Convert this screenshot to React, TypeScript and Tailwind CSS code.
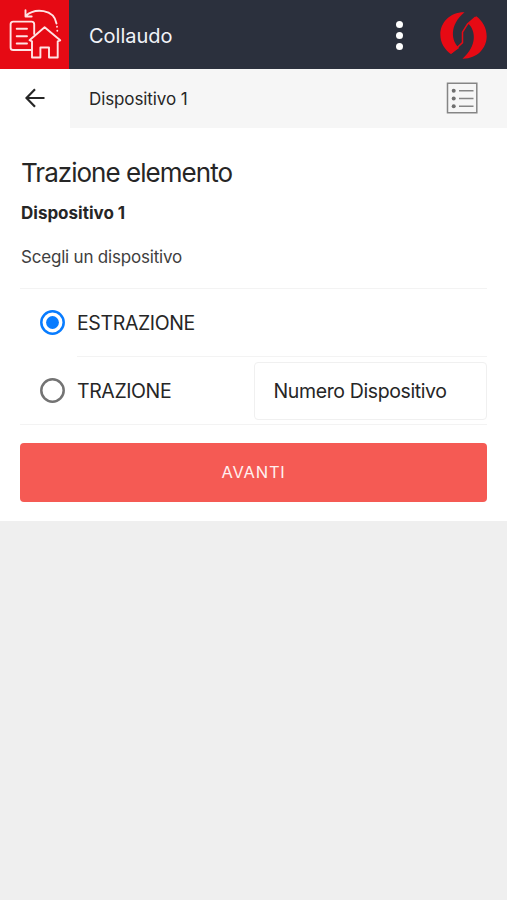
import React, { useState } from 'react';

function HomeDocIcon() {
  return (
    <svg
      className="w-[69px] h-[69px]"
      viewBox="0 0 69 69"
      fill="none"
      stroke="#ffe3e3"
      strokeWidth="1.9"
      strokeLinecap="round"
      strokeLinejoin="round"
    >
      <path d="M31 50H13.2a2.6 2.6 0 0 1-2.6-2.6V24.2a2.6 2.6 0 0 1 2.6-2.6h18.4a2.6 2.6 0 0 1 2.6 2.6V34" />
      <path d="M16.7 28.8H27M16.7 36.3H27M16.7 43.5H27" />
      <path d="M32 41.3l-2.5-1.1L44.6 27.3l15.6 13-2.5 1.1v16.1h-8.7V47.5h-8.6v10H32z" />
      <path d="M25.5 16C35 7.5 54 9 56.5 23.5M25.5 10.3v6.2h6.2" />
      <path d="M57 26.7v.1M57.3 30.7v.1" />
    </svg>
  );
}

function BrandLogo() {
  return (
    <svg className="w-[47px] h-[47px]" viewBox="0 0 140 140" fill="#e60a14">
      <path d="M73 1C30 0 1 32 1 67c0 25 13 45 31 58l25-18C34 88 26 40 73 1z" />
      <path d="M67 139c43 1 72-31 72-66 0-25-12-46-31-60L84 34c23 22 27 66-17 105z" />
      <path d="M106 15L82 36 67 60v31L33 123" fill="none" stroke="#e60a14" strokeWidth="4.5" />
    </svg>
  );
}

function ListIcon() {
  return (
    <svg className="w-8 h-8" viewBox="0 0 32 32" fill="none" stroke="#858585" strokeWidth="1.5">
      <path d="M1.5 1.2h29.3v29.6H1.5z" />
      <path d="M13 8.7h14.5M13 16.5h14.5M13 24.3h14.5" />
      <g fill="#6f6f6f" stroke="none">
        <circle cx="7.7" cy="8.7" r="2" />
        <circle cx="7.7" cy="16.5" r="2" />
        <circle cx="7.7" cy="24.3" r="2" />
      </g>
    </svg>
  );
}

function Radio({ checked }: { checked: boolean }) {
  return (
    <svg className="block w-[25px] h-[25px]" viewBox="0 0 25 25" fill="none">
      <circle cx="12.5" cy="12.5" r="11.2" stroke={checked ? '#087cff' : '#737373'} strokeWidth="2.5" />
      {checked && <circle cx="12.5" cy="12.5" r="6.4" fill="#087cff" />}
    </svg>
  );
}

export default function App() {
  const [choice, setChoice] = useState('estrazione');

  return (
    <div className="min-h-screen bg-[#efefef] font-['Inter',sans-serif] text-[#262626]">
      <header className="flex h-[69px] items-center bg-[#2b303d]">
        <div className="h-[69px] w-[69px] bg-[#e60a14]">
          <HomeDocIcon />
        </div>
        <h1 className="ml-5 flex-1 pt-[2px] text-[20px] text-[#f1f3f8]">Collaudo</h1>
        <button className="mr-[37.5px] flex flex-col gap-[4px] pt-px" aria-label="Menu">
          <span className="h-[7px] w-[7px] rounded-full bg-white" />
          <span className="h-[7px] w-[7px] rounded-full bg-white" />
          <span className="h-[7px] w-[7px] rounded-full bg-white" />
        </button>
        <div className="mr-5 pt-px">
          <BrandLogo />
        </div>
      </header>

      <nav className="flex h-[59px] items-center bg-[#f6f6f6]">
        <button className="flex h-full w-[70px] items-center justify-center bg-white pb-px" aria-label="Indietro">
          <svg className="h-5 w-5" viewBox="0 0 20 20" fill="none" stroke="#262626" strokeWidth="2.2">
            <path d="M19.5 10H2M10 1.3L1.5 10l8.5 8.7" />
          </svg>
        </button>
        <span className="ml-[19px] flex-1 pt-[2px] text-[17px] tracking-[-0.1px]">Dispositivo 1</span>
        <div className="mr-[29px] pb-px">
          <ListIcon />
        </div>
      </nav>

      <main className="h-[393px] bg-white px-5 pt-[28px]">
        <h2 className="ml-px text-[26px] leading-[34px] tracking-[-0.97px]">Trazione elemento</h2>
        <h3 className="ml-px mt-[11px] text-[17px] font-bold leading-6">Dispositivo 1</h3>
        <p className="ml-px mt-5 text-[17px] leading-6 tracking-[-0.2px] text-[#404040]">Scegli un dispositivo</p>

        <div className="mt-[19px] border-y border-[#f3f3f3]">
          <label className="flex h-[68px] items-start pl-5">
            <input
              type="radio"
              className="sr-only"
              checked={choice === 'estrazione'}
              onChange={() => setChoice('estrazione')}
            />
            <span className="mt-[21px]">
              <Radio checked={choice === 'estrazione'} />
            </span>
            <span className="ml-3 flex h-full flex-1 items-center border-b border-[#f3f3f3] pt-[2px] text-[19.5px] tracking-[-0.37px]">
              ESTRAZIONE
            </span>
          </label>
          <div className="flex h-[67px] items-center pl-5">
            <label className="flex flex-1 items-center">
              <input
                type="radio"
                className="sr-only"
                checked={choice === 'trazione'}
                onChange={() => setChoice('trazione')}
              />
              <Radio checked={choice === 'trazione'} />
              <span className="ml-3 pt-[2px] text-[19.5px] tracking-[-0.4px]">TRAZIONE</span>
            </label>
            <div className="flex h-[58px] w-[233px] items-center rounded-[4px] border border-[#f0f0f0] pl-[18.5px] pt-[2px] text-[19.5px] tracking-[-0.38px]">
              Numero Dispositivo
            </div>
          </div>
        </div>

        <button className="mt-[18px] h-[59px] w-full rounded-[4px] bg-[#f55a54] text-[16.5px] tracking-[0.8px] text-[#fff0ef]">
          AVANTI
        </button>
      </main>
    </div>
  );
}
